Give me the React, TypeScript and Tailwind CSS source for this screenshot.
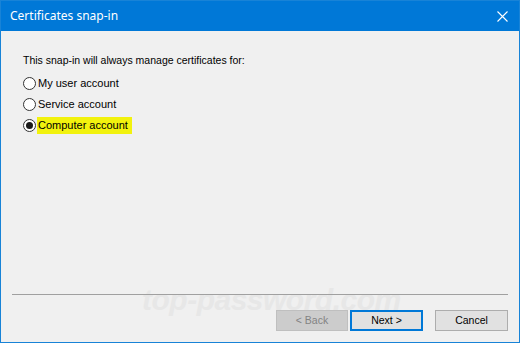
import React from 'react';

const radios = [
  { label: 'My user account', checked: false },
  { label: 'Service account', checked: false },
  { label: 'Computer account', checked: true },
];

function Radio({ checked }: { checked: boolean }) {
  return (
    <span className="relative flex h-[13px] w-[13px] shrink-0 items-center justify-center rounded-full border border-[#333333] bg-white">
      {checked && <span className="h-[7px] w-[7px] rounded-full bg-[#1a1a1a]" />}
    </span>
  );
}

export default function App() {
  return (
    <div
      className="relative flex h-[343px] w-[520px] flex-col overflow-hidden border border-[#1883d7] bg-[#f0f0f0] text-[10.5px] text-black"
      style={{ fontFamily: '"Liberation Sans", Arial, sans-serif' }}
    >
      {/* title bar */}
      <div className="flex h-[30px] shrink-0 items-center justify-between bg-[#0078d7] pl-[9px] pr-[11px] text-white">
        <span className="text-[12px]" style={{ fontFamily: '"Noto Sans", "Open Sans", sans-serif' }}>
          Certificates snap-in
        </span>
        <svg width="11" height="11" viewBox="0 0 11 11" className="mt-[1px]">
          <path d="M0.5 0.5 L10.5 10.5 M10.5 0.5 L0.5 10.5" stroke="#ffffff" strokeWidth="1.1" />
        </svg>
      </div>

      {/* body */}
      <div className="flex flex-1 flex-col pl-[22px] pt-[23px]">
        <div className="leading-[13px]">This snap-in will always manage certificates for:</div>
        <div className="mt-[9px] flex flex-col gap-[6px]">
          {radios.map((r) => (
            <div key={r.label} className="flex h-[15px] items-center">
              <Radio checked={r.checked} />
              <span
                className={`ml-[1px] flex items-center pl-[1px] pr-[4px] text-[11px] ${
                  r.checked ? 'h-[17px] bg-[#f2f20e]' : ''
                }`}
              >
                {r.label}
              </span>
            </div>
          ))}
        </div>
      </div>

      {/* watermark */}
      <div
        className="pointer-events-none absolute left-[141px] top-[284px] whitespace-nowrap text-[30px] font-bold italic leading-none tracking-[-0.5px] text-[#e7e7e7]"
        style={{ fontFamily: '"Liberation Sans", sans-serif' }}
      >
        top-password.com
      </div>

      {/* separator */}
      <div className="relative mx-[11px] h-px bg-[#a0a0a0]" />

      {/* footer */}
      <div className="relative flex justify-end pb-[11px] pr-[11px] pt-[15px]">
        <button className="h-[21px] w-[72px] border border-[#bfbfbf] bg-[#cccccc] text-[#838383]">
          &lt; Back
        </button>
        <button className="ml-[2px] h-[21px] w-[73px] border-2 border-[#0078d7] bg-[#e1e1e1]">
          Next &gt;
        </button>
        <button className="ml-[12px] h-[21px] w-[73px] border border-[#adadad] bg-[#e1e1e1]">
          Cancel
        </button>
      </div>
    </div>
  );
}
